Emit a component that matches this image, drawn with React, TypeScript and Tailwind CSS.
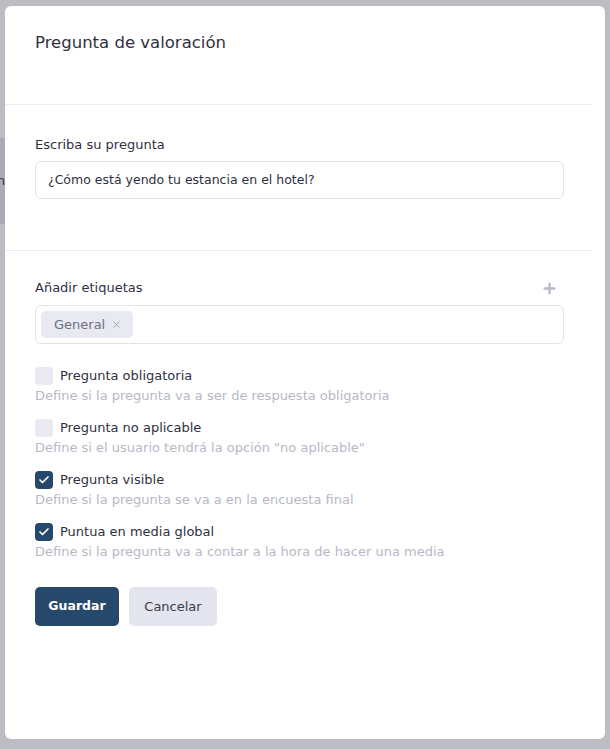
import { Check, Plus, X } from "lucide-react";

interface OptionProps {
    label: string;
    description: string;
    checked: boolean;
}

function Option({ label, description, checked }: OptionProps) {
    return (
        <div className="flex flex-col">
            <div className="flex h-[18px] items-center gap-[7px]">
                <span
                    className={
                        checked
                            ? "flex h-[18px] w-[18px] items-center justify-center rounded-[4px] bg-[#26486a]"
                            : "h-[18px] w-[18px] rounded-[4px] bg-[#e9e9f1]"
                    }
                >
                    {checked && (
                        <Check className="h-3 w-3 text-white" strokeWidth={3.5} />
                    )}
                </span>
                <span className="text-[13px] text-[#2f3140]">{label}</span>
            </div>
            <p className="mt-[2px] text-[13px] leading-[18px] text-[#b7b8c6]">
                {description}
            </p>
        </div>
    );
}

export default function App() {
    return (
        <div
            className="relative min-h-screen bg-[#bcbdc2] px-[5px] pb-[9px] pt-[6px]"
            style={{ fontFamily: "'DejaVu Sans', 'Open Sans', sans-serif" }}
        >
            {/* page behind the overlay */}
            <div className="absolute left-0 top-[138px] flex h-[86px] w-[5px] items-center overflow-hidden bg-[#abacb3] text-[13px] text-[#2f3140]">
                <span className="-ml-[3px]">n</span>
            </div>

            <div className="relative flex h-[733px] flex-col rounded-[6px] bg-white">
                <div className="mr-[12px] flex h-[99px] items-start border-b border-[#ececf2] px-[30px] pt-[26px]">
                    <h2 className="text-[16.5px] leading-[22px] text-[#2f3140]">
                        Pregunta de valoración
                    </h2>
                </div>

                <div className="mr-[12px] flex h-[146px] flex-col border-b border-[#ececf2] px-[30px] pt-[31px]">
                    <label className="text-[13px] leading-[18px] text-[#2f3140]">
                        Escriba su pregunta
                    </label>
                    <div className="-mr-[1px] mt-[7px] flex h-[38px] items-center rounded-[6px] border border-[#e3e3ec] px-[12px] text-[12.5px] text-[#2f3140]">
                        ¿Cómo está yendo tu estancia en el hotel?
                    </div>
                </div>

                <div className="flex flex-col px-[30px] pr-[42px] pt-[28px]">
                    <div className="-mr-[1px] flex items-center justify-between">
                        <span className="text-[13px] leading-[18px] text-[#2f3140]">
                            Añadir etiquetas
                        </span>
                        <Plus
                            className="mr-[6px] h-[17px] w-[17px] text-[#b7b8c6]"
                            strokeWidth={3.2}
                        />
                    </div>
                    <div className="-mr-[1px] mt-[8px] flex h-[39px] items-center rounded-[6px] border border-[#e3e3ec] px-[5px]">
                        <span className="flex h-[27px] items-center gap-[6px] rounded-[5px] bg-[#e8e9f1] pl-[13px] pr-[11px] text-[13px] text-[#6e7083]">
                            General
                            <X className="h-[11px] w-[11px] text-[#a0a2b2]" strokeWidth={2} />
                        </span>
                    </div>

                    <div className="mt-[23px] flex flex-col gap-[14px]">
                        <Option
                            label="Pregunta obligatoria"
                            description="Define si la pregunta va a ser de respuesta obligatoria"
                            checked={false}
                        />
                        <Option
                            label="Pregunta no aplicable"
                            description='Define si el usuario tendrá la opción "no aplicable"'
                            checked={false}
                        />
                        <Option
                            label="Pregunta visible"
                            description="Define si la pregunta se va a en la encuesta final"
                            checked={true}
                        />
                        <Option
                            label="Puntua en media global"
                            description="Define si la pregunta va a contar a la hora de hacer una media"
                            checked={true}
                        />
                    </div>

                    <div className="mt-[26px] flex gap-[10px]">
                        <button className="h-[39px] w-[84px] rounded-[5px] bg-[#26486a] text-[12.5px] font-bold text-white">
                            Guardar
                        </button>
                        <button className="h-[39px] w-[88px] rounded-[5px] bg-[#e4e5ef] text-[13px] text-[#3a3c4b]">
                            Cancelar
                        </button>
                    </div>
                </div>
            </div>
        </div>
    );
}
